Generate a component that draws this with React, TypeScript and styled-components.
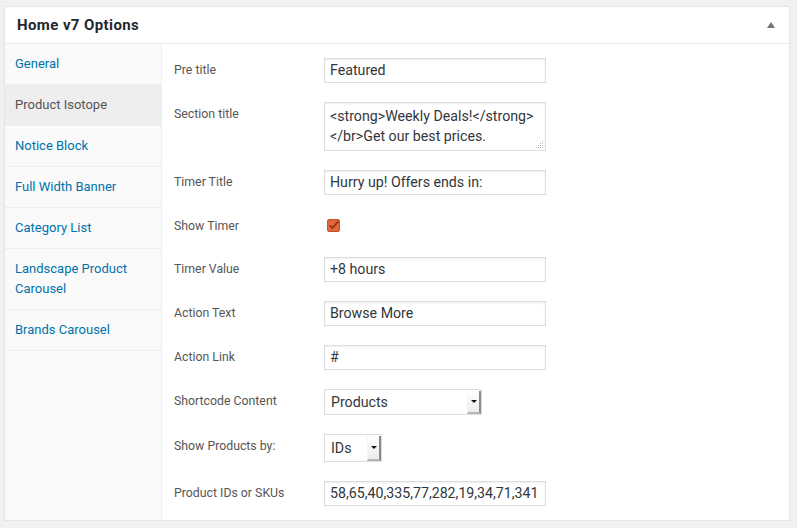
import React from "react";
import styled, { createGlobalStyle } from "styled-components";

const Global = createGlobalStyle`
  html, body { margin: 0; padding: 0; background: #f1f1f1; }
  body { font-family: Roboto, "Liberation Sans", Arial, sans-serif; }
  * { box-sizing: border-box; }
`;

const Page = styled.div`
  padding: 6px 7px 0 4px;
`;

const Panel = styled.div`
  background: #fff;
  border: 1px solid #e5e5e5;
  box-shadow: 0 1px 1px rgba(0, 0, 0, 0.04);
`;

const Header = styled.div`
  height: 37px;
  border-bottom: 1px solid #eee;
  display: flex;
  align-items: center;
  justify-content: space-between;
  padding: 0 14px 0 12px;
`;

const Title = styled.h2`
  margin: 0;
  font-size: 15px;
  letter-spacing: 0.4px;
  font-weight: 700;
  color: #23282d;
`;

const Toggle = styled.span`
  width: 0;
  height: 0;
  border-left: 4px solid transparent;
  border-right: 4px solid transparent;
  border-bottom: 6px solid #72777c;
  margin-bottom: 1px;
`;

const Body = styled.div`
  display: flex;
`;

const Sidebar = styled.ul`
  list-style: none;
  margin: 0;
  padding: 0;
  width: 157px;
  flex: none;
  background: #fafafa;
  border-right: 1px solid #eee;
`;

const NavItem = styled.li<{ $active?: boolean }>`
  padding: 10px 10px;
  line-height: 20px;
  font-size: 13px;
  border-bottom: 1px solid #eee;
  color: ${(p) => (p.$active ? "#555" : "#0073aa")};
  background: ${(p) => (p.$active ? "#eee" : "transparent")};
`;

const Content = styled.div`
  flex: 1;
  padding: 14px 12px 14px 12px;
  display: flex;
  flex-direction: column;
  gap: 19px;
`;

const Row = styled.div`
  display: grid;
  grid-template-columns: 150px 1fr;
  align-items: start;
`;

const Label = styled.div`
  font-size: 12.3px;
  line-height: 24px;
  color: #555;
`;

const Input = styled.div`
  width: 222px;
  height: 25px;
  border: 1px solid #ddd;
  box-shadow: inset 0 1px 2px rgba(0, 0, 0, 0.07);
  padding: 0 5px;
  font-size: 14.2px;
  line-height: 23px;
  color: #32373c;
  white-space: nowrap;
  overflow: hidden;
`;

const TextArea = styled.div`
  position: relative;
  width: 222px;
  height: 49px;
  border: 1px solid #ddd;
  box-shadow: inset 0 1px 2px rgba(0, 0, 0, 0.07);
  padding: 3px 5px;
  font-size: 14.2px;
  line-height: 20px;
  color: #32373c;
`;

const Grip = styled.svg`
  position: absolute;
  right: 1px;
  bottom: 1px;
`;

const CheckWrap = styled.div`
  height: 24px;
  padding: 5px 0 0 3px;
  display: flex;
  align-items: flex-start;
`;

const Select = styled.div<{ $w: number; $h: number }>`
  width: ${(p) => p.$w}px;
  height: ${(p) => p.$h}px;
  border: 1px solid #ddd;
  display: flex;
  align-items: stretch;
  font-size: 14.2px;
  color: #32373c;
`;

const SelectText = styled.span`
  flex: 1;
  padding-left: 6px;
  display: flex;
  align-items: center;
`;

const Arrow = styled.span`
  width: 14px;
  display: flex;
  align-items: center;
  justify-content: center;
  background: linear-gradient(#fff, #ececec);
  border-right: 2px solid #8a8a8a;
  border-bottom: 2px solid #b5b5b5;
  border-left: 1px solid #f4f4f4;
  margin: 1px 0 0 0;
  &::after {
    content: "";
    border-left: 3px solid transparent;
    border-right: 3px solid transparent;
    border-top: 3px solid #111;
    margin-left: 1px;
  }
`;

const nav = [
  "General",
  "Product Isotope",
  "Notice Block",
  "Full Width Banner",
  "Category List",
  "Landscape Product Carousel",
  "Brands Carousel",
];

export default function App() {
  return (
    <>
      <Global />
      <Page>
        <Panel>
          <Header>
            <Title>Home v7 Options</Title>
            <Toggle />
          </Header>
          <Body>
            <Sidebar>
              {nav.map((n) => (
                <NavItem key={n} $active={n === "Product Isotope"}>
                  {n}
                </NavItem>
              ))}
            </Sidebar>
            <Content>
              <Row>
                <Label>Pre title</Label>
                <Input>Featured</Input>
              </Row>
              <Row>
                <Label>Section title</Label>
                <TextArea>
                  &lt;strong&gt;Weekly Deals!&lt;/strong&gt;
                  <br />
                  &lt;/br&gt;Get our best prices.
                  <Grip width="9" height="9" viewBox="0 0 9 9">
                    <g fill="#bbb">
                      <rect x="7" y="1" width="1" height="1" />
                      <rect x="5" y="3" width="1" height="1" />
                      <rect x="7" y="3" width="1" height="1" />
                      <rect x="3" y="5" width="1" height="1" />
                      <rect x="5" y="5" width="1" height="1" />
                      <rect x="7" y="5" width="1" height="1" />
                      <rect x="1" y="7" width="1" height="1" />
                      <rect x="3" y="7" width="1" height="1" />
                      <rect x="5" y="7" width="1" height="1" />
                      <rect x="7" y="7" width="1" height="1" />
                    </g>
                  </Grip>
                </TextArea>
              </Row>
              <Row>
                <Label>Timer Title</Label>
                <Input>Hurry up! Offers ends in:</Input>
              </Row>
              <Row>
                <Label>Show Timer</Label>
                <CheckWrap>
                  <svg width="13" height="13" viewBox="0 0 13 13">
                    <rect x="0.5" y="0.5" width="12" height="12" rx="1.5" fill="#e0683c" stroke="#c4532b" />
                    <path d="M2.8 6.4 L5.4 9 L11.5 2.2" fill="none" stroke="#8e3416" strokeWidth="1.8" />
                  </svg>
                </CheckWrap>
              </Row>
              <Row>
                <Label>Timer Value</Label>
                <Input>+8 hours</Input>
              </Row>
              <Row>
                <Label>Action Text</Label>
                <Input>Browse More</Input>
              </Row>
              <Row>
                <Label>Action Link</Label>
                <Input>#</Input>
              </Row>
              <Row>
                <Label>Shortcode Content</Label>
                <Select $w={158} $h={26}>
                  <SelectText>Products</SelectText>
                  <Arrow />
                </Select>
              </Row>
              <Row>
                <Label>Show Products by:</Label>
                <Select $w={58} $h={28}>
                  <SelectText>IDs</SelectText>
                  <Arrow />
                </Select>
              </Row>
              <Row>
                <Label>Product IDs or SKUs</Label>
                <Input>58,65,40,335,77,282,19,34,71,341</Input>
              </Row>
            </Content>
          </Body>
        </Panel>
      </Page>
    </>
  );
}
